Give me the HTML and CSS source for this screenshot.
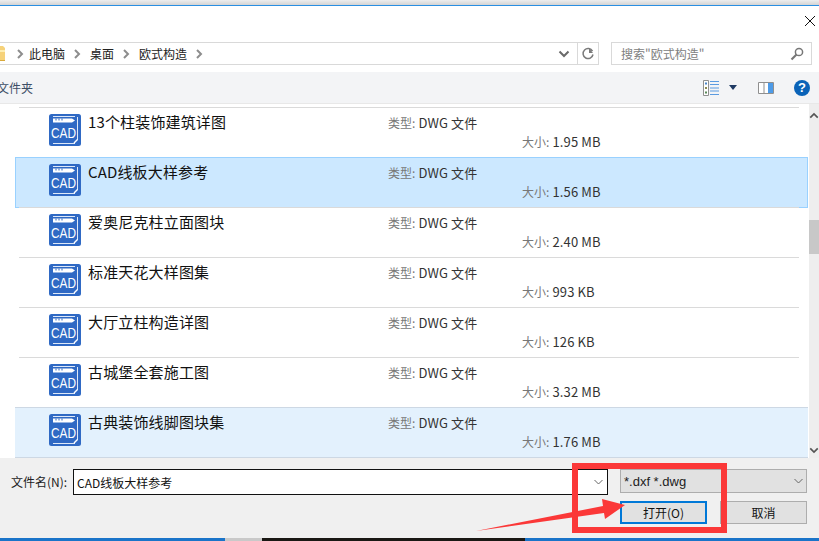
FILE: index.html
```html
<!DOCTYPE html>
<html lang="zh-CN">
<head>
<meta charset="utf-8">
<title>打开</title>
<link rel="stylesheet" href="styles.css">
</head>
<body>
<svg class="defs" width="0" height="0" aria-hidden="true">
  <symbol id="cad" viewBox="0 0 32 32">
    <rect x="0" y="0" width="32" height="32" rx="2.500" fill="#2f69c4"/>
    <path d="M4 2.500h22M28.500 3v23M4 29.500h22" stroke="#dfe9f8" stroke-width="1" fill="none"/>
    <path d="M4 4.500h19l3 2-3 2H4z" fill="#fff"/>
    <path d="M7 4.500v2M10 4.500v2M13 4.500v2" stroke="#2f69c4" stroke-width="1"/>
    <path d="M25 29l3.500-3.500" stroke="#fff" stroke-width="1.500"/>
    <text x="14.500" y="24" textLength="25" lengthAdjust="spacingAndGlyphs" class="cad-label">CAD</text>
  </symbol>
  <symbol id="chev" viewBox="0 0 8 10">
    <path d="M2 1l4 4-4 4" fill="none" stroke="#8d8d8d" stroke-width="2"/>
  </symbol>
  <symbol id="down" viewBox="0 0 9 6">
    <path d="M.5 1L4.500 5l4-4" fill="none" stroke="currentColor" stroke-width="1"/>
  </symbol>
</svg>

<div class="titlestrip"></div>

<div class="titlebar">
  <svg class="close" viewBox="0 0 10 10"><path d="M0 0l10 10M10 0L0 10" stroke="#111" stroke-width="1"/></svg>
</div>

<div class="navbar">
  <div class="crumbs">
    <svg class="folder" viewBox="0 0 6 17"><path d="M0 1h3l2 2v13H0z" fill="#f6d27a"/><path d="M0 5h5v2H0z" fill="#fdeeb4"/><path d="M0 15h5v1H0z" fill="#d9a93b"/></svg>
    <svg class="chev chev-first"><use href="#chev"/></svg>
    <span class="crumb">此电脑</span>
    <svg class="chev"><use href="#chev"/></svg>
    <span class="crumb">桌面</span>
    <svg class="chev"><use href="#chev"/></svg>
    <span class="crumb">欧式构造</span>
    <svg class="chev"><use href="#chev"/></svg>
    <svg class="crumb-down" viewBox="0 0 12 8"><path d="M1.500 1.500L6 6l4.500-4.500" fill="none" stroke="#6a6a6a" stroke-width="2"/></svg>
    <span class="refresh">
      <svg width="14" height="14" viewBox="0 0 14 14"><path d="M11.500 4.200A5 5 0 1 0 12 7.500" fill="none" stroke="#7a7a7a" stroke-width="1.500"/><path d="M8 1v5h4z" fill="#7a7a7a"/></svg>
    </span>
  </div>
  <div class="search">
    <span class="search-text">搜索"欧式构造"</span>
    <svg width="14" height="14" viewBox="0 0 14 14"><circle cx="9" cy="5" r="3.600" fill="none" stroke="#777" stroke-width="1.500"/><path d="M6.500 7.500L1.500 12.500" stroke="#777" stroke-width="2.200"/></svg>
  </div>
</div>

<div class="toolbar">
  <span class="newfolder">新建文件夹</span>
  <svg class="tool-views" width="16" height="16" viewBox="0 0 16 16">
    <path d="M.5.500h5v15h-5z" fill="#fff" stroke="#8f8f8f"/>
    <path d="M2 2.500h2v2H2z" fill="#4a86c8"/><path d="M2 7h2v2H2z" fill="#8a8a50"/><path d="M2 11.500h2v2H2z" fill="#5a8a5a"/>
    <path d="M7 1.500h9M7 4.500h9M7 8h9M7 11h9M7 14.500h9" stroke="#5b9be0" stroke-width="1"/>
  </svg>
  <svg class="tool-caret" width="8" height="5" viewBox="0 0 8 5"><path d="M0 0h8L4 5z" fill="#1f3a63"/></svg>
  <svg class="tool-pane" width="16" height="12" viewBox="0 0 16 12"><path d="M.5.500h15v11H.5z" fill="#fff" stroke="#8f8f8f"/><path d="M6 .500v11" stroke="#8f8f8f"/><path d="M10 1h5v10h-5z" fill="#4d9be8"/></svg>
  <span class="help">?</span>
</div>

<div class="browser">
  <div class="list">
    <div class="row">
      <svg class="icon"><use href="#cad"/></svg>
      <span class="name">13个柱装饰建筑详图</span>
      <div class="meta"><div><span class="key">类型:</span> DWG 文件</div><div class="size"><span class="key">大小:</span> 1.95 MB</div></div>
    </div>
    <div class="row selected">
      <svg class="icon"><use href="#cad"/></svg>
      <span class="name">CAD线板大样参考</span>
      <div class="meta"><div><span class="key">类型:</span> DWG 文件</div><div class="size"><span class="key">大小:</span> 1.56 MB</div></div>
    </div>
    <div class="row">
      <svg class="icon"><use href="#cad"/></svg>
      <span class="name">爱奥尼克柱立面图块</span>
      <div class="meta"><div><span class="key">类型:</span> DWG 文件</div><div class="size"><span class="key">大小:</span> 2.40 MB</div></div>
    </div>
    <div class="row">
      <svg class="icon"><use href="#cad"/></svg>
      <span class="name">标准天花大样图集</span>
      <div class="meta"><div><span class="key">类型:</span> DWG 文件</div><div class="size"><span class="key">大小:</span> 993 KB</div></div>
    </div>
    <div class="row">
      <svg class="icon"><use href="#cad"/></svg>
      <span class="name">大厅立柱构造详图</span>
      <div class="meta"><div><span class="key">类型:</span> DWG 文件</div><div class="size"><span class="key">大小:</span> 126 KB</div></div>
    </div>
    <div class="row">
      <svg class="icon"><use href="#cad"/></svg>
      <span class="name">古城堡全套施工图</span>
      <div class="meta"><div><span class="key">类型:</span> DWG 文件</div><div class="size"><span class="key">大小:</span> 3.32 MB</div></div>
    </div>
    <div class="row hovered">
      <svg class="icon"><use href="#cad"/></svg>
      <span class="name">古典装饰线脚图块集</span>
      <div class="meta"><div><span class="key">类型:</span> DWG 文件</div><div class="size"><span class="key">大小:</span> 1.76 MB</div></div>
    </div>
  </div>
  <div class="scrollbar">
    <svg class="sb-arrow" viewBox="0 0 12 8"><path d="M1.500 6.500L6 2l4.500 4.500" fill="none" stroke="#555" stroke-width="2"/></svg>
    <div class="sb-track"><div class="sb-thumb"></div></div>
    <svg class="sb-arrow" viewBox="0 0 12 8"><path d="M1.500 1.500L6 6l4.500-4.500" fill="none" stroke="#555" stroke-width="2"/></svg>
  </div>
</div>

<div class="footer">
  <div class="footer-line">
    <label class="file-label">文件名(N):</label>
    <div class="file-input">
      <span class="file-value">CAD线板大样参考</span>
      <svg class="dd"><use href="#down"/></svg>
    </div>
    <div class="filter">
      <span>*.dxf *.dwg</span>
      <svg class="dd"><use href="#down"/></svg>
    </div>
  </div>
  <div class="footer-buttons">
    <button class="btn btn-primary">打开(O)</button>
    <button class="btn btn-cancel">取消</button>
  </div>
</div>

<div class="taskbar">
  <div class="tb-a"></div><div class="tb-b"></div><div class="tb-c"></div><div class="tb-d"></div>
</div>

<div class="redbox"></div>
<svg class="redarrow" width="160" height="40" viewBox="0 0 160 40">
  <path d="M1 34 L128 9 L127 2 L150 8 L130 22 L129 16 Z" fill="#fb3838"/>
</svg>
</body>
</html>
```
FILE: styles.css
```css
* { box-sizing: border-box; }
html, body { margin: 0; padding: 0; }
body {
  width: 819px;
  height: 541px;
  overflow: hidden;
  position: relative;
  background: #fff;
  font-family: "Noto Sans CJK SC", "Liberation Sans", sans-serif;
  font-size: 12px;
  color: #1a1a1a;
  display: flex;
  flex-direction: column;
}
.defs { display: none; }
.cad-label {
  font-family: "Liberation Sans", sans-serif;
  font-size: 15px;
  fill: #fff;
  text-anchor: middle;
}

.titlestrip {
  height: 6px;
  flex: none;
  background: linear-gradient(#eeeeee, #d4d4d4);
  border-bottom: 1px solid #2a8fe2;
}
.titlebar {
  height: 36px;
  flex: none;
  display: flex;
  justify-content: flex-end;
  padding: 10px 4px 0 0;
}
.close { width: 10px; height: 10px; }

.navbar {
  height: 23px;
  flex: none;
  display: flex;
  gap: 12px;
  padding-right: 7px;
}
.crumbs {
  width: 599px;
  display: flex;
  align-items: center;
  border: 1px solid #d9d9d9;
  border-left: 0;
}
.folder { width: 6px; height: 17px; margin-right: 10px; }
.chev { width: 8px; height: 10px; flex: none; margin-right: 9px; }
.chev-first { margin-right: 5px; }
.crumb { margin-right: 8px; line-height: 21px; color: #222; }
.crumb-down { width: 12px; height: 8px; margin-left: auto; margin-right: 7px; }
.refresh {
  width: 21px;
  height: 21px;
  border-left: 1px solid #d9d9d9;
  display: flex;
  align-items: center;
  justify-content: center;
}
.search {
  flex: 1;
  display: flex;
  align-items: center;
  justify-content: space-between;
  border: 1px solid #d9d9d9;
  padding: 0 7px 0 9px;
  color: #808080;
}

.toolbar {
  height: 31px;
  margin-top: 7px;
  flex: none;
  background: #f3f4f6;
  display: flex;
  align-items: center;
  padding-right: 9px;
}
.newfolder { margin-left: -27px; color: #3d4f66; }
.tool-views { margin-left: auto; }
.tool-caret { margin-left: 10px; }
.tool-pane { margin-left: 21px; }
.help {
  margin-left: 20px;
  width: 16px;
  height: 16px;
  border-radius: 50%;
  background: #0a63b8;
  color: #fff;
  font: bold 13px/16px "Liberation Sans", sans-serif;
  text-align: center;
}

.browser {
  flex: none;
  height: 355px;
  display: flex;
  border-top: 1px solid #e8e8e8;
}
.list {
  width: 809px;
  padding: 3px 1px 0 15px;
}
.row {
  position: relative;
  height: 50px;
  display: grid;
  grid-template-columns: 32px 300px 1fr;
  column-gap: 7px;
  padding: 7px 0 0 34px;
  background: linear-gradient(#dadada, #dadada) 4px 0 / 780px 1px no-repeat;
}
.selected {
  background: #cce8ff;
  box-shadow: inset 1px 1px 0 #99d1ff, inset -1px 0 0 #99d1ff, 0 1px 0 #99d1ff;
}
.hovered {
  background: #e3f1fd;
  box-shadow: inset 0 1px 0 #cdd8e4, 0 1px 0 #cdd8e4;
}
.icon { width: 32px; height: 32px; }
.name {
  font-size: 15px;
  line-height: 16px;
  letter-spacing: .15px;
  color: #111;
}
.meta {
  padding-top: 1px;
  color: #333;
  font-size: 13px;
  line-height: 16px;
  letter-spacing: .15px;
  margin-left: -7px;
}
.size { margin: 3px 0 0 134px; }
.key { color: #777; font-size: 12px; letter-spacing: 0; }

.scrollbar {
  width: 10px;
  background: #eeeeee;
  display: flex;
  flex-direction: column;
  padding: 8px 0 4px;
  overflow: hidden;
}
.sb-arrow { width: 10px; height: 7px; flex: none; }
.sb-track { flex: 1; padding-top: 101px; }
.sb-thumb { height: 34px; background: #c8c8c8; }

.footer {
  height: 80px;
  flex: none;
  background: #f0f0f0;
  padding: 11px 12px 0 11px;
}
.footer-line {
  display: flex;
  align-items: flex-start;
}
.file-label { width: 62px; line-height: 25px; color: #222; }
.file-input {
  width: 535px;
  height: 26px;
  border: 1px solid #111;
  background: #fff;
  display: flex;
  align-items: center;
  justify-content: space-between;
  padding: 0 4px 0 3px;
  color: #111;
}
.file-input .dd { color: #666; }
.dd { width: 9px; height: 6px; }
.filter {
  width: 187px;
  height: 24px;
  margin-left: 12px;
  background: #e1e1e1;
  border: 1px solid #adadad;
  display: flex;
  align-items: center;
  justify-content: space-between;
  padding: 0 3px;
  font-family: "Liberation Sans", sans-serif;
  font-size: 13px;
  color: #222;
}
.filter .dd { color: #666; }
.footer-buttons {
  display: flex;
  justify-content: flex-end;
  gap: 13px;
  margin-top: 6px;
}
.btn {
  width: 87px;
  height: 23px;
  padding: 0;
  background: #e1e1e1;
  border: 1px solid #adadad;
  font: 12px "Noto Sans CJK SC", sans-serif;
  color: #111;
}
.btn-primary { border: 2px solid #0078d7; }

.taskbar { height: 3px; flex: none; display: flex; }
.tb-a { width: 225px; background: #1a74c9; }
.tb-b { width: 37px; background: #c9c9c9; }
.tb-c { width: 263px; background: #1a1814; }
.tb-d { flex: 1; background: #1a74c9; }

.redbox {
  position: absolute;
  left: 572px;
  top: 463px;
  width: 155px;
  height: 70px;
  border: 6px solid #fb3838;
}
.redarrow {
  position: absolute;
  left: 475px;
  top: 497px;
}
```
